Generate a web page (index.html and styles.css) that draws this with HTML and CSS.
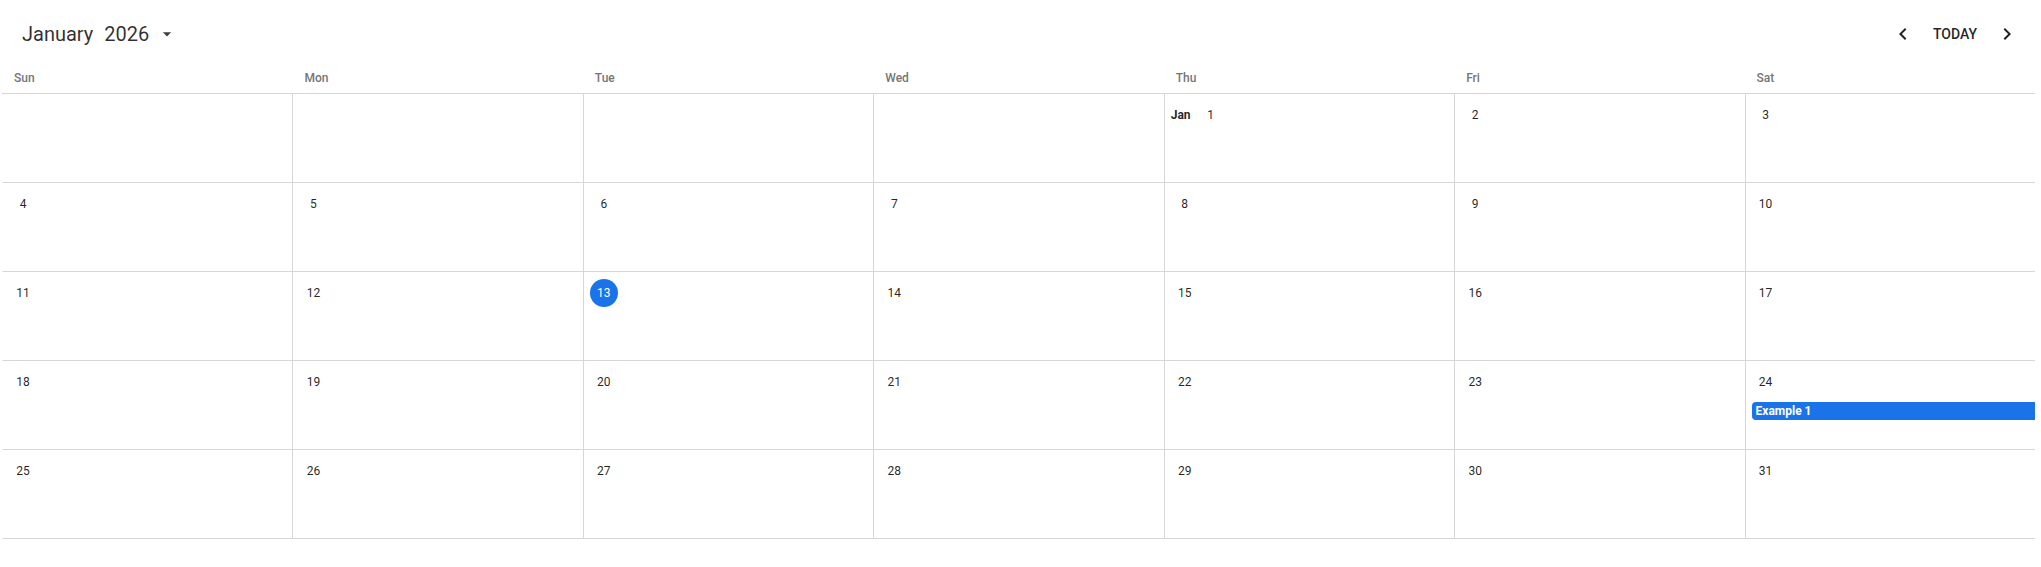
FILE: index.html
```html
<!DOCTYPE html>
<html lang="en">
  <head>
    <meta charset="UTF-8" />
    <meta name="viewport" content="width=device-width, initial-scale=1.0" />
    <title>Calendar</title>
    <link rel="stylesheet" href="styles.css">
  </head>
  <body>
    <div class="calendar">
      <div class="toolbar">
        <div class="title">
          <span>January</span>
          <span>2026</span>
          <svg class="drop-icon" viewBox="0 0 24 24"><path d="M7 10l5 5 5-5z"/></svg>
        </div>
        <div class="nav">
          <button class="icon-btn" title="Previous">
            <svg viewBox="0 0 24 24"><path d="M15.41 7.41L14 6l-6 6 6 6 1.41-1.41L10.83 12z"/></svg>
          </button>
          <button class="today-btn">TODAY</button>
          <button class="icon-btn" title="Next">
            <svg viewBox="0 0 24 24"><path d="M10 6L8.59 7.41 13.17 12l-4.58 4.59L10 18l6-6z"/></svg>
          </button>
        </div>
      </div>

      <div class="weekdays">
        <div class="weekday">Sun</div>
        <div class="weekday">Mon</div>
        <div class="weekday">Tue</div>
        <div class="weekday">Wed</div>
        <div class="weekday">Thu</div>
        <div class="weekday">Fri</div>
        <div class="weekday">Sat</div>
      </div>

      <div class="month-grid">
        <!-- week 1 -->
        <div class="day"></div>
        <div class="day"></div>
        <div class="day"></div>
        <div class="day"></div>
        <div class="day"><div class="day-label"><span class="month-label">Jan</span><span class="day-num">1</span></div></div>
        <div class="day"><div class="day-label"><span class="day-num">2</span></div></div>
        <div class="day"><div class="day-label"><span class="day-num">3</span></div></div>
        <!-- week 2 -->
        <div class="day"><div class="day-label"><span class="day-num">4</span></div></div>
        <div class="day"><div class="day-label"><span class="day-num">5</span></div></div>
        <div class="day"><div class="day-label"><span class="day-num">6</span></div></div>
        <div class="day"><div class="day-label"><span class="day-num">7</span></div></div>
        <div class="day"><div class="day-label"><span class="day-num">8</span></div></div>
        <div class="day"><div class="day-label"><span class="day-num">9</span></div></div>
        <div class="day"><div class="day-label"><span class="day-num">10</span></div></div>
        <!-- week 3 -->
        <div class="day"><div class="day-label"><span class="day-num">11</span></div></div>
        <div class="day"><div class="day-label"><span class="day-num">12</span></div></div>
        <div class="day"><div class="day-label"><span class="day-num today">13</span></div></div>
        <div class="day"><div class="day-label"><span class="day-num">14</span></div></div>
        <div class="day"><div class="day-label"><span class="day-num">15</span></div></div>
        <div class="day"><div class="day-label"><span class="day-num">16</span></div></div>
        <div class="day"><div class="day-label"><span class="day-num">17</span></div></div>
        <!-- week 4 -->
        <div class="day"><div class="day-label"><span class="day-num">18</span></div></div>
        <div class="day"><div class="day-label"><span class="day-num">19</span></div></div>
        <div class="day"><div class="day-label"><span class="day-num">20</span></div></div>
        <div class="day"><div class="day-label"><span class="day-num">21</span></div></div>
        <div class="day"><div class="day-label"><span class="day-num">22</span></div></div>
        <div class="day"><div class="day-label"><span class="day-num">23</span></div></div>
        <div class="day">
          <div class="day-label"><span class="day-num">24</span></div>
          <div class="event">Example 1</div>
        </div>
        <!-- week 5 -->
        <div class="day"><div class="day-label"><span class="day-num">25</span></div></div>
        <div class="day"><div class="day-label"><span class="day-num">26</span></div></div>
        <div class="day"><div class="day-label"><span class="day-num">27</span></div></div>
        <div class="day"><div class="day-label"><span class="day-num">28</span></div></div>
        <div class="day"><div class="day-label"><span class="day-num">29</span></div></div>
        <div class="day"><div class="day-label"><span class="day-num">30</span></div></div>
        <div class="day"><div class="day-label"><span class="day-num">31</span></div></div>
      </div>
    </div>
  </body>
</html>
```

FILE: styles.css
```css
body {
  margin: 0;
  font-family: Roboto, "Liberation Sans", sans-serif;
  color: rgba(0, 0, 0, 0.87);
  background: white;
}
.calendar {
  padding: 0 6px 0 2px;
}
.toolbar {
  height: 68px;
  display: flex;
  align-items: center;
  justify-content: space-between;
  padding: 0 10px 0 20px;
}
.title {
  display: flex;
  align-items: center;
  gap: 11px;
  font-size: 20px;
  color: rgba(0, 0, 0, 0.82);
}
.drop-icon {
  width: 20px;
  height: 20px;
  margin-left: -3px;
  fill: rgba(0, 0, 0, 0.75);
}
.nav {
  display: flex;
  align-items: center;
}
.icon-btn {
  width: 36px;
  height: 36px;
  padding: 6px;
  border: none;
  background: none;
  border-radius: 50%;
  cursor: pointer;
}
.icon-btn svg {
  display: block;
  width: 24px;
  height: 24px;
  fill: rgba(0, 0, 0, 0.87);
}
.today-btn {
  height: 36px;
  padding: 0 12px;
  border: none;
  background: none;
  font-family: inherit;
  font-size: 14px;
  font-weight: 500;
  color: rgba(0, 0, 0, 0.87);
  cursor: pointer;
}
.weekdays {
  display: grid;
  grid-template-columns: repeat(7, 1fr);
  height: 25px;
}
.weekday {
  padding-left: 12px;
  line-height: 20px;
  font-size: 12px;
  font-weight: 500;
  color: #757575;
}
.month-grid {
  display: grid;
  grid-template-columns: repeat(7, 1fr);
  border-top: 1px solid #d6d6d6;
}
.day {
  box-sizing: border-box;
  height: 89px;
  padding: 7px 0 0 6px;
  border-left: 1px solid #d6d6d6;
  border-bottom: 1px solid #d6d6d6;
  min-width: 0;
}
.day:nth-child(7n + 1) {
  border-left-color: transparent;
}
.day-label {
  display: flex;
  align-items: center;
  height: 28px;
  font-size: 12px;
}
.month-label {
  font-weight: 700;
  margin-right: 6px;
}
.day-num {
  min-width: 28px;
  height: 28px;
  line-height: 28px;
  text-align: center;
  border-radius: 50%;
}
.day-num.today {
  background-color: #1a73e8;
  color: white;
}
.event {
  margin-top: 6px;
  height: 18px;
  line-height: 18px;
  padding-left: 4px;
  background-color: #1a73e8;
  color: white;
  font-size: 12px;
  font-weight: 700;
  border-radius: 4px 0 0 4px;
  white-space: nowrap;
  overflow: hidden;
}
```
